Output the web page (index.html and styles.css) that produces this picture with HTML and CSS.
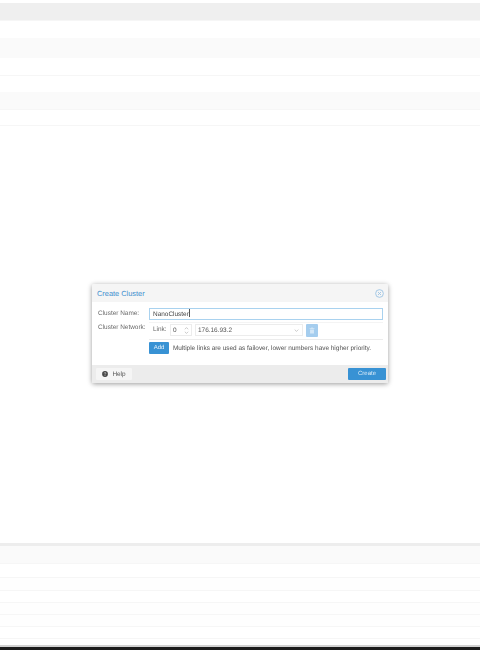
FILE: index.html
```html
<!DOCTYPE html>
<html lang="en">
<head>
<meta charset="utf-8">
<title>Create Cluster</title>
<link rel="stylesheet" href="styles.css">
</head>
<body>
<div class="page">
  <div class="rows rows-top">
    <div class="row h18 head"></div>
    <div class="row h17"></div>
    <div class="row h20 alt"></div>
    <div class="row h18 line"></div>
    <div class="row h16"></div>
    <div class="row h18 alt line"></div>
    <div class="row h16 line"></div>
  </div>
  <main class="stage">
    <section class="dialog">
      <header class="dlg-head">
        <h1 class="dlg-title">Create Cluster</h1>
        <svg class="close" viewBox="0 0 10 10" aria-hidden="true"><circle cx="5" cy="5" r="4.300" fill="none" stroke="#9cc4e4" stroke-width="1"/><path d="M3.300 3.300 6.700 6.700M6.700 3.300 3.300 6.700" stroke="#9cc4e4" stroke-width="1"/></svg>
      </header>
      <div class="dlg-body">
        <div class="field">
          <span class="label">Cluster Name:</span>
          <div class="name-input">NanoCluster<span class="caret"></span></div>
        </div>
        <div class="field net">
          <span class="label">Cluster Network:</span>
          <div class="net-box">
            <span class="link-label">Link:</span>
            <div class="spin"><span>0</span><svg class="spin-arrows" viewBox="0 0 6 10" aria-hidden="true"><path d="M1 3.500 3 1.500 5 3.500M1 6.500 3 8.500 5 6.500" fill="none" stroke="#b8b8b8" stroke-width=".9"/></svg></div>
            <div class="combo"><span>176.16.93.2</span><svg class="combo-arrow" viewBox="0 0 8 5" aria-hidden="true"><path d="M1 1 4 4 7 1" fill="none" stroke="#aaa" stroke-width="1"/></svg></div>
            <div class="trash"><svg viewBox="0 0 8 9" aria-hidden="true"><path d="M3 .6h2v.8h2.200v1H.8v-1H3zM1.400 3h5.200v5.400H1.400z" fill="#d4e7f7"/></svg></div>
          </div>
        </div>
        <div class="add-row">
          <button class="btn add" type="button">Add</button>
          <span class="hint">Multiple links are used as failover, lower numbers have higher priority.</span>
        </div>
      </div>
      <footer class="dlg-foot">
        <button class="btn help" type="button"><svg viewBox="0 0 10 10" aria-hidden="true"><circle cx="5" cy="5" r="4.800" fill="#444"/><path d="M3.600 4c0-2 2.900-1.900 2.900-.2 0 1.100-1.500 1.100-1.500 2.200" fill="none" stroke="#eee" stroke-width="1"/><circle cx="5" cy="7.500" r=".7" fill="#eee"/></svg>Help</button>
        <button class="btn create" type="button">Create</button>
      </footer>
    </section>
  </main>
  <div class="rows rows-bottom">
    <div class="row h3 rule"></div>
    <div class="row h18 alt line"></div>
    <div class="row h14 line"></div>
    <div class="row h13 soft line"></div>
    <div class="row h12 line"></div>
    <div class="row h12 soft line"></div>
    <div class="row h12 soft line"></div>
    <div class="row h12 line"></div>
    <div class="row h6"></div>
    <div class="row h2 end"></div>
  </div>
  <div class="blackbar"></div>
</div>
</body>
</html>
```

FILE: styles.css
```css
* { box-sizing: border-box; }
html, body { margin: 0; height: 100%; }
body { background: #fff; font-family: "Liberation Sans", Arial, sans-serif; color: #555; overflow: hidden; text-rendering: geometricPrecision; }
.page { display: flex; flex-direction: column; height: 650px; width: 480px; }

.rows-top { padding-top: 3px; }
.row { width: 100%; }
.h2 { height: 2px; } .h3 { height: 3px; } .h6 { height: 6px; }
.h12 { height: 12px; } .h13 { height: 13px; } .h14 { height: 14px; }
.h15 { height: 15px; } .h16 { height: 16px; } .h17 { height: 17px; }
.h18 { height: 18px; } .h20 { height: 20px; }
.head { background: #efefef; border-bottom: 1px solid #f6f6f6; }
.alt { background: #fafafa; }
.soft { background: #fefefe; }
.line { border-bottom: 1px solid #f6f6f6; }
.rule { background: #ededed; }
.end { background: #d2d2d2; }
.blackbar { height: 3px; background: #1c1c1c; }

.stage { flex: 1; display: flex; justify-content: center; align-items: flex-start; padding-top: 158px; }
.dialog { width: 296px; height: 99px; display: flex; flex-direction: column; background: #fff; border-radius: 2px; box-shadow: 0 1px 5px rgba(0,0,0,.4); filter: blur(.4px); }
.dlg-head { height: 18px; background: #f5f5f5; display: flex; align-items: center; justify-content: space-between; padding: 0 4px 0 5px; border-radius: 2px 2px 0 0; }
.dlg-title { margin: 0; font-size: 7.400px; font-weight: 400; color: #3f8fcf; }
.close { width: 9px; height: 9px; margin-top: 1px; }
.dlg-body { flex: 1; padding: 6px 5px 0 6px; font-size: 6.450px; }
.field { display: flex; }
.label { width: 51px; flex: none; line-height: 12px; color: #6a6a6a; }
.name-input { flex: 1; height: 12px; line-height: 10px; border: 1px solid #a9d2ef; padding-left: 3px; color: #444; background: #fff; }
.caret { display: inline-block; width: 1px; height: 8px; background: #555; vertical-align: -1px; }
.net { margin-top: 2px; }
.net .label { line-height: 11px; }
.net-box { flex: 1; height: 18px; display: flex; align-items: flex-start; padding-top: 1px; border-top: 1px solid #f4f4f4; border-bottom: 1px solid #ececec; }
.link-label { width: 21px; line-height: 12px; padding-left: 4px; color: #6a6a6a; }
.spin { width: 22px; height: 12px; border: 1px solid #ececec; display: flex; align-items: center; justify-content: space-between; padding: 0 2px 0 2px; color: #555; }
.spin-arrows { width: 5px; height: 9px; }
.combo { width: 108px; height: 12px; margin-left: 3px; border: 1px solid #ececec; display: flex; align-items: center; justify-content: space-between; padding: 0 3px 0 2px; color: #555; }
.combo-arrow { width: 5px; height: 3px; }
.trash { width: 12px; height: 13px; margin-left: 3px; background: #a5cdee; border-radius: 1px; display: flex; align-items: center; justify-content: center; }
.trash svg { width: 6px; height: 7px; }
.add-row { display: flex; align-items: center; margin-top: 2px; padding-left: 51px; }
.btn { font-family: inherit; border: 0; padding: 0; margin: 0; font-size: 6px; border-radius: 1px; text-rendering: geometricPrecision; }
.add { width: 20px; height: 12px; background: #3892d4; color: #e8f3fb; }
.hint { margin-left: 4px; color: #505050; white-space: nowrap; }
.dlg-foot { height: 18px; background: #ececec; display: flex; align-items: center; justify-content: space-between; padding: 0 2px 0 4px; }
.help { width: 36px; height: 12px; background: #f5f5f5; color: #555; display: flex; align-items: center; justify-content: center; gap: 4px; font-size: 6.450px; }
.help svg { width: 6px; height: 6px; }
.create { width: 38px; height: 12px; background: #3892d4; color: #dcecf8; }
```
